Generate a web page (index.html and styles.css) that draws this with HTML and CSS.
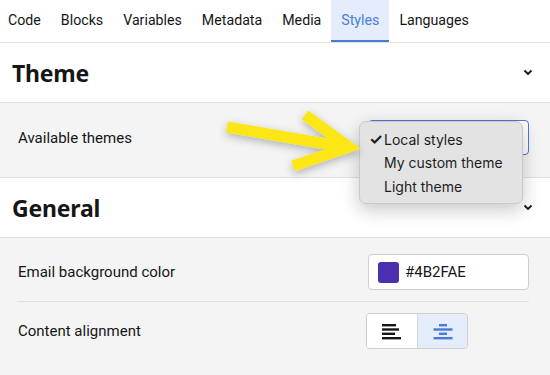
FILE: index.html
```html
<!DOCTYPE html>
<html>
<head>
<meta charset="utf-8">
<link rel="stylesheet" href="styles.css">
</head>
<body>
<div class="page">
  <nav class="tabs">
    <span class="tab">Code</span>
    <span class="tab">Blocks</span>
    <span class="tab">Variables</span>
    <span class="tab">Metadata</span>
    <span class="tab">Media</span>
    <span class="tab active">Styles</span>
    <span class="tab">Languages</span>
  </nav>

  <section class="section">
    <header class="section-header">
      <h2 class="section-title">Theme</h2>
      <svg class="chevron" width="10" height="7" viewBox="0 0 10 7"><polyline points="1.5,1.5 5,5 8.5,1.5" fill="none" stroke="#161616" stroke-width="1.8"/></svg>
    </header>
    <div class="section-body theme-body">
      <div class="field-row theme-row">
        <span class="field-label">Available themes</span>
        <div class="select-wrap">
          <div class="select"></div>
          <div class="menu">
            <div class="menu-item checked"><span class="check">✓</span>Local styles</div>
            <div class="menu-item">My custom theme</div>
            <div class="menu-item">Light theme</div>
          </div>
        </div>
      </div>
    </div>
  </section>

  <section class="section">
    <header class="section-header">
      <h2 class="section-title">General</h2>
      <svg class="chevron" width="10" height="7" viewBox="0 0 10 7"><polyline points="1.5,1.5 5,5 8.5,1.5" fill="none" stroke="#161616" stroke-width="1.8"/></svg>
    </header>
    <div class="section-body">
      <div class="field-row color-row">
        <span class="field-label">Email background color</span>
        <div class="color-input">
          <span class="swatch"></span>
          <span class="color-value">#4B2FAE</span>
        </div>
      </div>
      <div class="field-row align-row">
        <span class="field-label">Content alignment</span>
        <div class="btn-group">
          <button class="seg-btn">
            <svg width="22" height="18" viewBox="0 0 22 18"><g fill="#161616"><rect x="1" y="2" width="14" height="2.4"/><rect x="1" y="6.3" width="17" height="2.4"/><rect x="1" y="10.6" width="13" height="2.4"/><rect x="1" y="15" width="19" height="2.4"/></g></svg>
          </button>
          <button class="seg-btn selected">
            <svg width="22" height="18" viewBox="0 0 22 18"><g fill="#4a7bd7"><rect x="7" y="2" width="8" height="2.4"/><rect x="1.5" y="6.3" width="19" height="2.4"/><rect x="7" y="10.6" width="8" height="2.4"/><rect x="1.5" y="15" width="19" height="2.4"/></g></svg>
          </button>
        </div>
      </div>
    </div>
  </section>

  <svg class="pointer-arrow" width="550" height="375" viewBox="0 0 550 375">
    <defs>
      <filter id="sh" x="-20%" y="-30%" width="140%" height="160%">
        <feDropShadow dx="0" dy="3" stdDeviation="4" flood-color="#000" flood-opacity="0.28"/>
      </filter>
    </defs>
    <g filter="url(#sh)" fill="none" stroke="#fde614" stroke-width="11">
      <line x1="227" y1="127" x2="344" y2="147" stroke-linecap="butt"/>
      <polyline points="305,115 349,147 293,166" stroke-linejoin="miter" stroke-miterlimit="10"/>
    </g>
  </svg>
</div>
</body>
</html>
```
FILE: styles.css
```css
* { box-sizing: border-box; }
html, body { margin: 0; padding: 0; }
body {
  width: 550px;
  height: 375px;
  overflow: hidden;
  background: #f4f4f4;
  font-family: "Roboto", "Noto Sans", sans-serif;
  color: #161616;
}
.page { position: relative; width: 550px; height: 375px; }

.tabs {
  display: flex;
  height: 43px;
  background: #fff;
  border-bottom: 1px solid #e0e0e0;
}
.tab {
  display: flex;
  align-items: center;
  padding: 0 10px 2px;
  font-size: 14.2px;
  color: #161616;
}
.tab:first-child { padding-left: 8px; }
.tab.active {
  background: #e5ecfb;
  color: #4a7fe0;
  border-bottom: 2px solid #4a7bd7;
  padding-bottom: 0;
}

.section-header {
  display: flex;
  align-items: center;
  justify-content: space-between;
  height: 60px;
  padding: 0 17px 0 12px;
  background: #fff;
  border-bottom: 1px solid #e0e0e0;
}
.section-title {
  margin: 0;
  font-family: "Noto Sans", sans-serif;
  font-size: 23px;
  font-weight: 700;
  letter-spacing: -0.2px;
}
.chevron { display: block; }

.section-body {
  background: #f4f4f4;
  padding: 0 21px 0 18px;
}
.theme-body { border-bottom: 1px solid #e0e0e0; }

.field-row {
  display: flex;
  align-items: center;
  justify-content: space-between;
}
.field-label { font-size: 15px; }

.theme-row { padding: 17px 0 22px; }
.select-wrap { position: relative; width: 161px; height: 35px; }
.select {
  width: 100%;
  height: 100%;
  background: #fff;
  border: 1.5px solid #4a7bd7;
  border-radius: 4px;
}
.menu {
  position: absolute;
  left: -9px;
  top: 1px;
  width: 164px;
  padding: 6px 0 5px;
  background: #e3e3e3;
  border: 1px solid #c9c9c9;
  border-radius: 7px;
  box-shadow: 0 6px 18px rgba(0,0,0,0.22);
  font-family: "Inter", "Liberation Sans", sans-serif;
  font-size: 14px;
  color: #1d1d1d;
}
.menu-item {
  position: relative;
  height: 23.3px;
  line-height: 23.3px;
  padding-left: 24px;
}
.check {
  position: absolute;
  left: 9px;
  font-size: 15.5px;
  font-weight: 700;
}

.color-row {
  padding: 16px 0 11px;
  border-bottom: 1px solid #e0e0e0;
}
.color-input {
  display: flex;
  align-items: center;
  gap: 6px;
  width: 161px;
  height: 36px;
  padding: 0 9px;
  background: #fff;
  border: 1px solid #cfcfcf;
  border-radius: 4px;
}
.swatch {
  width: 21px;
  height: 21px;
  border-radius: 3px;
  background: #4b2fae;
}
.color-value { font-size: 15px; }

.align-row {
  align-items: flex-start;
  padding-top: 11px;
  height: 73px;
}
.align-row .field-label { margin-top: 9px; }
.btn-group {
  display: flex;
  margin-right: 61px;
  border: 1px solid #cfcfcf;
  border-radius: 4px;
  overflow: hidden;
}
.seg-btn {
  display: flex;
  align-items: center;
  justify-content: center;
  width: 50px;
  height: 34px;
  padding: 0;
  border: 0;
  background: #fff;
}
.seg-btn + .seg-btn { border-left: 1px solid #d6d6d6; }
.seg-btn.selected { background: #e5ecfb; }

.pointer-arrow {
  position: absolute;
  left: 0;
  top: 0;
  pointer-events: none;
}
```
